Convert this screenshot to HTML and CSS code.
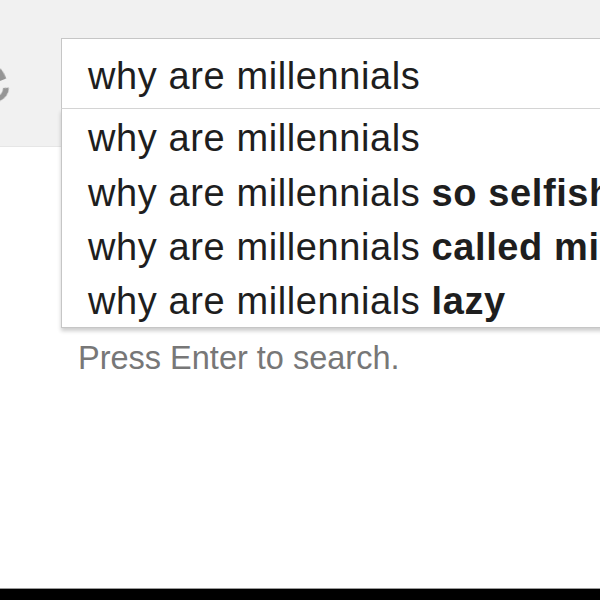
FILE: index.html
```html
<!DOCTYPE html>
<html lang="en">
<head>
  <meta charset="UTF-8">
  <title>why are millennials</title>
  <link rel="stylesheet" href="styles.css">
</head>
<body>

  <!-- Search header -->
  <header class="top-bar">
    <div class="logo"><span class="logo-letter">e</span></div>
    <div class="search">
      <div class="search-input">why are millennials</div>
      <ul class="suggestions">
        <li>why are millennials</li>
        <li>why are millennials <b>so selfish</b></li>
        <li>why are millennials <b>called millennials</b></li>
        <li>why are millennials <b>lazy</b></li>
      </ul>
    </div>
  </header>

  <main>
    <p class="hint">Press Enter to search.</p>
  </main>

  <footer class="bottom-bar"></footer>

</body>
</html>
```

FILE: styles.css
```css
* {
  margin: 0;
  padding: 0;
  box-sizing: border-box;
}

html, body {
  height: 100%;
  overflow: hidden;
}

body {
  font-family: 'Liberation Sans', Arial, sans-serif;
  color: #1e1e1e;
  background: #fff;
  display: flex;
  flex-direction: column;
}

/* Header */
.top-bar {
  background-color: #f1f1f1;
  border-bottom: 1px solid #e6e6e6;
  display: flex;
  align-items: flex-start;
  height: 147px;
  padding-top: 38px;
}

.logo {
  width: 61px;
  flex: 0 0 61px;
  overflow: hidden;
  height: 70px;
}

.logo-letter {
  display: block;
  font-size: 72px;
  line-height: 70px;
  color: #959595;
  margin-left: -34px;
  margin-top: -5px;
  transform: rotate(-22deg);
  filter: blur(0.7px);
}

.search {
  position: relative;
  flex: 0 0 620px;
}

.search-input {
  height: 71px;
  background: #fff;
  border: 1px solid #c6c6c6;
  border-bottom-color: #d6d6d6;
  padding-left: 26px;
  padding-top: 4px;
  font-size: 38px;
  letter-spacing: 0.6px;
  line-height: 66px;
}

/* Autocomplete dropdown */
.suggestions {
  position: absolute;
  top: 100%;
  left: 0;
  right: 0;
  list-style: none;
  background: #fff;
  border: 1px solid #c6c6c6;
  border-top: none;
  box-shadow: 0 3px 4px rgba(0, 0, 0, 0.2);
  padding-top: 2px;
  z-index: 2;
}

.suggestions li {
  font-size: 38px;
  letter-spacing: 0.6px;
  line-height: 54.5px;
  padding-left: 26px;
  white-space: nowrap;
}

.suggestions li:last-child {
  line-height: 52px;
}

.suggestions b {
  font-weight: bold;
}

/* Content */
main {
  flex: 1;
}

.hint {
  margin-top: 191px;
  padding-left: 78px;
  font-size: 32.5px;
  line-height: 40px;
  color: #777;
}

.bottom-bar {
  height: 12px;
  background: #000;
  border-top: 1px solid #9a9a9a;
}
```
